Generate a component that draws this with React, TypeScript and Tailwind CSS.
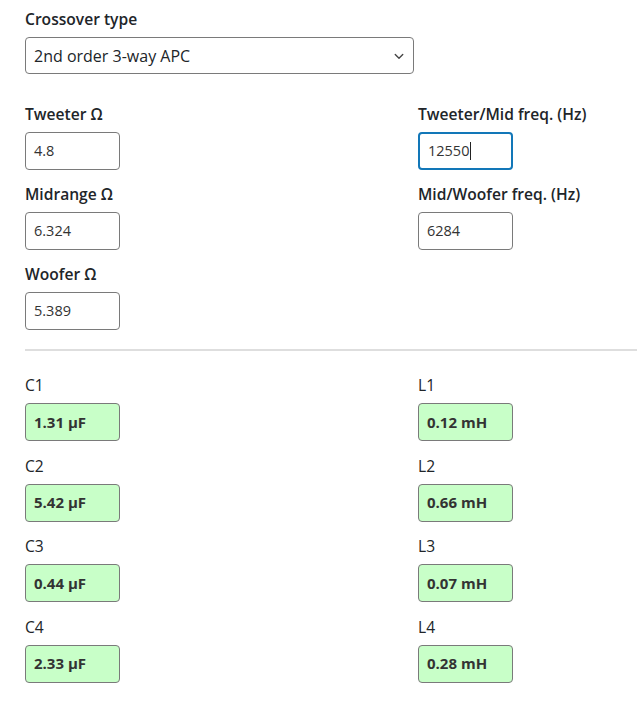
import React from "react";

const font = { fontFamily: '"Segoe UI", "Open Sans", "Noto Sans", sans-serif' };

function Field({ label, value, focused }: { label: string; value: string; focused?: boolean }) {
  return (
    <div className="flex flex-col">
      <div className="h-[24px] leading-[24px] text-[15.6px] font-semibold text-[#212529] whitespace-nowrap">{label}</div>
      <div
        className={
          "mt-[6px] h-[38px] w-[95px] rounded-[4px] bg-white flex items-center pl-[8px] text-[14.5px] text-[#333] " +
          (focused ? "border-2 border-[#1277b8] pl-[8px]" : "border border-[#7a7a7a]")
        }
      >
        {value}
        {focused && <span className="inline-block w-px h-[18px] bg-[#222] ml-px" />}
      </div>
    </div>
  );
}

function Out({ label, value }: { label: string; value: string }) {
  return (
    <div className="flex flex-col">
      <div className="h-[24px] leading-[24px] text-[15.6px] text-[#212529]">{label}</div>
      <div className="mt-[6px] h-[38px] w-[95px] rounded-[4px] bg-[#c8ffc8] border border-[#7a7a7a] flex items-center pl-[8px] text-[15px] font-bold text-[#333]">
        {value}
      </div>
    </div>
  );
}

export default function App() {
  return (
    <div className="w-[637px] h-[703px] bg-white overflow-hidden pl-[25px] pt-[7px]" style={font}>
      <div className="h-[24px] leading-[24px] text-[15.6px] font-semibold text-[#212529]">Crossover type</div>
      <div className="mt-[6px] h-[37px] w-[389px] rounded-[4px] border border-[#7a7a7a] flex items-center justify-between pl-[8px] pr-[8px] text-[16px] text-[#212529]">
        <span>2nd order 3-way APC</span>
        <svg width="12" height="12" viewBox="0 0 16 16" fill="none">
          <path d="M3 6l5 5 5-5" stroke="#444" strokeWidth="1.8" strokeLinecap="round" strokeLinejoin="round" />
        </svg>
      </div>

      <div className="mt-[28px] grid grid-cols-[393px_1fr] gap-y-[12px]">
        <Field label="Tweeter Ω" value="4.8" />
        <Field label="Tweeter/Mid freq. (Hz)" value="12550" focused />
        <Field label="Midrange Ω" value="6.324" />
        <Field label="Mid/Woofer freq. (Hz)" value="6284" />
        <Field label="Woofer Ω" value="5.389" />
        <div />
      </div>

      <div className="mt-[19px] h-[2px] bg-[#dedede]" />

      <div className="mt-[22px] grid grid-cols-[393px_1fr] gap-y-[12.5px]">
        <Out label="C1" value="1.31 µF" />
        <Out label="L1" value="0.12 mH" />
        <Out label="C2" value="5.42 µF" />
        <Out label="L2" value="0.66 mH" />
        <Out label="C3" value="0.44 µF" />
        <Out label="L3" value="0.07 mH" />
        <Out label="C4" value="2.33 µF" />
        <Out label="L4" value="0.28 mH" />
      </div>
    </div>
  );
}
